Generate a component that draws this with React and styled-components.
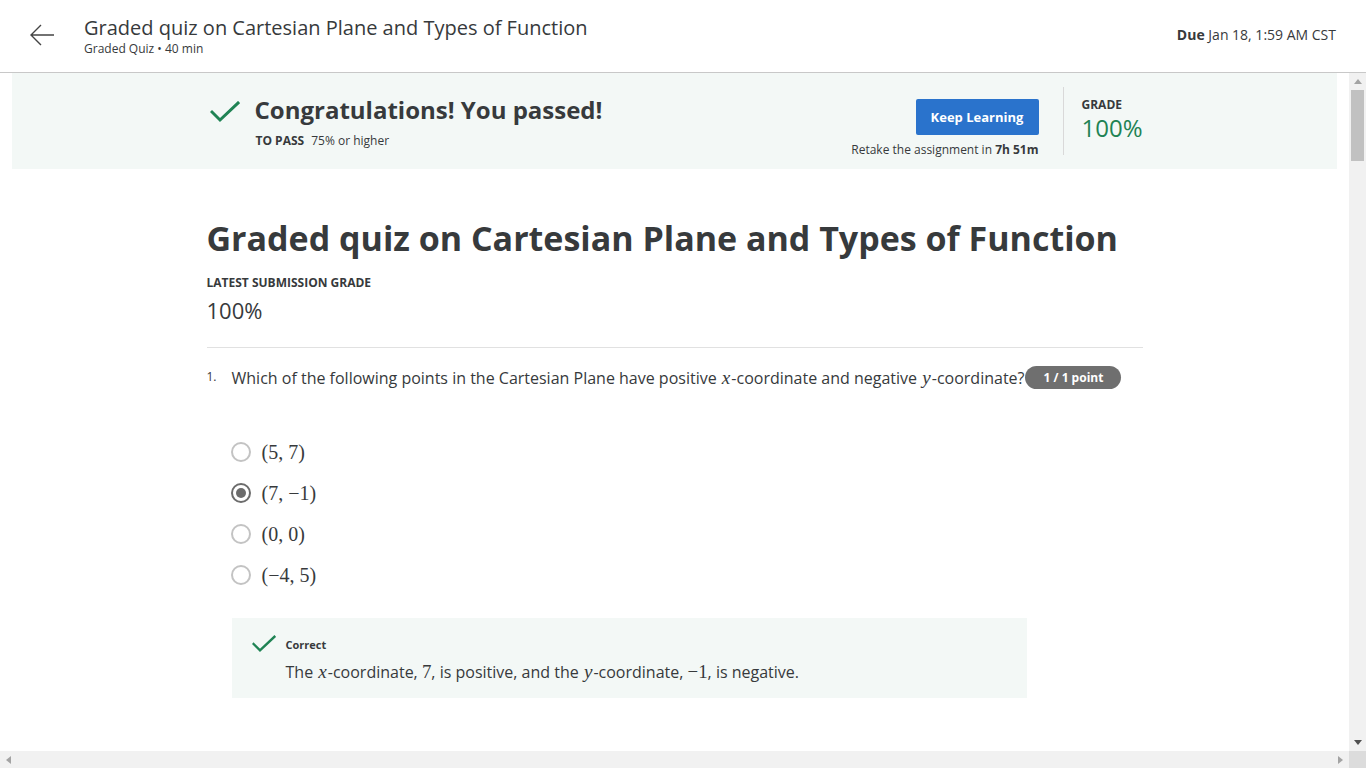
import React from "react";
import styled, { createGlobalStyle } from "styled-components";

const Global = createGlobalStyle`
  html, body { margin: 0; padding: 0; height: 100%; overflow: hidden; }
  body { font-family: "Open Sans", "Noto Sans", sans-serif; color: #373a3c; background: #fff; }
  * { box-sizing: border-box; }
`;

const Page = styled.div`
  height: 100vh;
  display: flex;
  flex-direction: column;
`;

const Header = styled.header`
  height: 73px;
  flex: none;
  border-bottom: 1px solid #c8c8c8;
  display: flex;
  align-items: center;
  padding: 0 30px 0 28px;
`;

const BackButton = styled.button`
  border: 0;
  background: none;
  padding: 0;
  width: 28px;
  height: 28px;
  display: flex;
  align-items: center;
  justify-content: center;
  margin-right: 28px;
  margin-top: -2px;
  color: #373a3c;
`;

const TitleBlock = styled.div`
  display: flex;
  flex-direction: column;
  flex: 1;
  margin-top: -1px;
`;

const HeaderTitle = styled.h1`
  margin: 0;
  font-size: 20px;
  font-weight: 400;
  line-height: 26px;
  color: #373a3c;
`;

const HeaderSub = styled.div`
  font-size: 12px;
  line-height: 16px;
  color: #373a3c;
`;

const Due = styled.div`
  font-size: 14px;
  color: #373a3c;
  margin-top: -3px;
  b { font-weight: 700; }
`;

const Body = styled.div`
  flex: 1;
  min-height: 0;
  display: grid;
  grid-template-columns: 1fr 17px;
  grid-template-rows: 1fr 17px;
`;

const Viewport = styled.div`
  overflow: hidden;
  min-height: 0;
`;

const VScroll = styled.div`
  background: #f1f1f1;
  display: flex;
  flex-direction: column;
  align-items: center;
`;

const ScrollArrow = styled.div`
  height: 17px;
  width: 17px;
  flex: none;
  display: flex;
  align-items: center;
  justify-content: center;
`;

const VThumb = styled.div`
  width: 13px;
  height: 71px;
  background: #c1c1c1;
`;

const VTrackFill = styled.div`
  flex: 1;
`;

const HScroll = styled.div`
  background: #f1f1f1;
  display: flex;
  align-items: center;
  justify-content: space-between;
`;

const Corner = styled.div`
  background: #dcdcdc;
`;

const Banner = styled.section`
  margin: 0 12px;
  background: #f3f8f6;
  height: 96px;
`;

const BannerInner = styled.div`
  width: 936px;
  margin: 0 auto;
  height: 100%;
  display: flex;
  align-items: stretch;
`;

const PassBlock = styled.div`
  flex: 1;
  display: flex;
  padding-top: 20px;
`;

const CheckWrap = styled.div`
  width: 48px;
  flex: none;
  padding-top: 8px;
  padding-left: 3px;
`;

const PassTexts = styled.div`
  display: flex;
  flex-direction: column;
`;

const PassTitle = styled.h2`
  margin: 0;
  font-size: 24px;
  line-height: 34px;
  font-weight: 700;
  color: #373a3c;
`;

const PassReq = styled.div`
  font-size: 12px;
  line-height: 20px;
  margin-top: 4px;
  padding-left: 1px;
  b { font-weight: 700; margin-right: 7px; }
`;

const ActionBlock = styled.div`
  display: flex;
  flex-direction: column;
  align-items: flex-end;
  padding-top: 26px;
`;

const PrimaryButton = styled.button`
  width: 123px;
  height: 36px;
  border: 0;
  border-radius: 2px;
  background: #2a73cc;
  color: #fff;
  font-family: "Open Sans", sans-serif;
  font-weight: 700;
  font-size: 13px;
`;

const Retake = styled.div`
  font-size: 12px;
  line-height: 16px;
  margin-top: 7px;
  b { font-weight: 700; }
`;

const Divider = styled.div`
  width: 1px;
  background: #d9d9d9;
  margin: 14px 18px 14px 24px;
`;

const GradeBlock = styled.div`
  width: 61px;
  display: flex;
  flex-direction: column;
  padding-top: 24px;
`;

const SmallCaps = styled.div`
  font-size: 12px;
  font-weight: 700;
  line-height: 16px;
  color: #373a3c;
`;

const GradeValue = styled.div`
  font-size: 24px;
  line-height: 30px;
  color: #1f8354;
`;

const Main = styled.main`
  width: 936px;
  margin: 0 auto;
  padding-top: 45px;
`;

const QuizTitle = styled.h1`
  margin: 0;
  font-size: 34px;
  line-height: 48px;
  font-weight: 700;
  color: #373a3c;
`;

const LatestLabel = styled(SmallCaps)`
  margin-top: 13px;
`;

const LatestValue = styled.div`
  font-size: 22px;
  line-height: 30px;
  margin-top: 4px;
  color: #373a3c;
`;

const Rule = styled.hr`
  border: 0;
  border-top: 1px solid #e1e1e1;
  margin: 22px 0 0;
`;

const Question = styled.div`
  display: flex;
  align-items: center;
  margin-top: 18px;
`;

const QNum = styled.span`
  font-size: 12px;
  width: 25px;
  flex: none;
  margin-top: -2px;
`;

const QText = styled.span`
  font-size: 16px;
  line-height: 22px;
  color: #373a3c;
`;

const MathI = styled.i`
  font-family: "Liberation Serif", "DejaVu Serif", serif;
  font-style: italic;
  font-size: 1.2em;
  padding: 0 1px;
`;

const MathN = styled.span`
  font-family: "Liberation Serif", "DejaVu Serif", serif;
  font-size: 1.18em;
`;

const PointBadge = styled.span`
  display: inline-flex;
  align-items: center;
  justify-content: center;
  width: 96px;
  height: 23px;
  border-radius: 12px;
  background: #6f6f6f;
  color: #fff;
  font-size: 12px;
  font-weight: 700;
  margin-left: 1px;
`;

const Options = styled.div`
  display: flex;
  flex-direction: column;
  gap: 13px;
  margin-top: 49px;
  padding-left: 24px;
`;

const Option = styled.label`
  display: flex;
  align-items: center;
  height: 28px;
`;

const Radio = styled.span`
  width: 20px;
  height: 20px;
  border-radius: 50%;
  border: 2px solid ${(p) => (p.$checked ? "#6c6c6c" : "#c3c3c3")};
  display: flex;
  align-items: center;
  justify-content: center;
  margin-right: 11px;
  &::after {
    content: "";
    width: 10px;
    height: 10px;
    border-radius: 50%;
    background: ${(p) => (p.$checked ? "#6c6c6c" : "transparent")};
  }
`;

const OptionText = styled.span`
  font-family: "Liberation Serif", "DejaVu Serif", serif;
  font-size: 20px;
  color: #373a3c;
  margin-top: 1px;
`;

const Feedback = styled.div`
  margin: 29px 0 0 25px;
  width: 795px;
  height: 80px;
  background: #f3f8f6;
  display: flex;
  padding: 17px 0 0 20px;
`;

const FeedbackIcon = styled.div`
  width: 34px;
  flex: none;
`;

const FeedbackBody = styled.div`
  display: flex;
  flex-direction: column;
`;

const FeedbackTitle = styled.div`
  font-size: 11px;
  font-weight: 700;
  line-height: 20px;
`;

const FeedbackText = styled.div`
  font-size: 16px;
  line-height: 24px;
  margin-top: 5px;
`;

const Check = ({ w = 30, h = 22 }) => (
  <svg width={w} height={h} viewBox="0 0 30 22" fill="none">
    <polyline points="2,11 10,19 28,2" stroke="#1f8354" strokeWidth="3" strokeLinecap="square" />
  </svg>
);

const options = [
  { t: "(5, 7)" },
  { t: "(7, −1)", checked: true },
  { t: "(0, 0)" },
  { t: "(−4, 5)" },
];

export default function App() {
  return (
    <Page>
      <Global />
      <Header>
        <BackButton aria-label="Back">
          <svg width="26" height="22" viewBox="0 0 26 22" fill="none">
            <path d="M25 11H2M12 1L2 11l10 10" stroke="#444" strokeWidth="1.4" />
          </svg>
        </BackButton>
        <TitleBlock>
          <HeaderTitle>Graded quiz on Cartesian Plane and Types of Function</HeaderTitle>
          <HeaderSub>Graded Quiz • 40 min</HeaderSub>
        </TitleBlock>
        <Due>
          <b>Due</b> Jan 18, 1:59 AM CST
        </Due>
      </Header>
      <Body>
        <Viewport>
          <Banner>
            <BannerInner>
              <PassBlock>
                <CheckWrap>
                  <Check />
                </CheckWrap>
                <PassTexts>
                  <PassTitle>Congratulations! You passed!</PassTitle>
                  <PassReq>
                    <b>TO PASS</b>75% or higher
                  </PassReq>
                </PassTexts>
              </PassBlock>
              <ActionBlock>
                <PrimaryButton>Keep Learning</PrimaryButton>
                <Retake>
                  Retake the assignment in <b>7h 51m</b>
                </Retake>
              </ActionBlock>
              <Divider />
              <GradeBlock>
                <SmallCaps>GRADE</SmallCaps>
                <GradeValue>100%</GradeValue>
              </GradeBlock>
            </BannerInner>
          </Banner>
          <Main>
            <QuizTitle>Graded quiz on Cartesian Plane and Types of Function</QuizTitle>
            <LatestLabel>LATEST SUBMISSION GRADE</LatestLabel>
            <LatestValue>100%</LatestValue>
            <Rule />
            <Question>
              <QNum>1.</QNum>
              <QText>
                Which of the following points in the Cartesian Plane have positive <MathI>x</MathI>-coordinate and
                negative <MathI>y</MathI>-coordinate?
              </QText>
              <PointBadge>1 / 1 point</PointBadge>
            </Question>
            <Options>
              {options.map((o) => (
                <Option key={o.t}>
                  <Radio $checked={o.checked} />
                  <OptionText>{o.t}</OptionText>
                </Option>
              ))}
            </Options>
            <Feedback>
              <FeedbackIcon>
                <Check w={24} h={18} />
              </FeedbackIcon>
              <FeedbackBody>
                <FeedbackTitle>Correct</FeedbackTitle>
                <FeedbackText>
                  The <MathI>x</MathI>-coordinate, <MathN>7</MathN>, is positive, and the <MathI>y</MathI>-coordinate,{" "}
                  <MathN>−1</MathN>, is negative.
                </FeedbackText>
              </FeedbackBody>
            </Feedback>
          </Main>
        </Viewport>
        <VScroll>
          <ScrollArrow>
            <svg width="8" height="5" viewBox="0 0 8 5"><polygon points="0,5 8,5 4,0" fill="#a3a3a3" /></svg>
          </ScrollArrow>
          <VThumb />
          <VTrackFill />
          <ScrollArrow>
            <svg width="8" height="5" viewBox="0 0 8 5"><polygon points="0,0 8,0 4,5" fill="#505050" /></svg>
          </ScrollArrow>
        </VScroll>
        <HScroll>
          <ScrollArrow>
            <svg width="5" height="8" viewBox="0 0 5 8"><polygon points="5,0 5,8 0,4" fill="#a3a3a3" /></svg>
          </ScrollArrow>
          <ScrollArrow>
            <svg width="5" height="8" viewBox="0 0 5 8"><polygon points="0,0 0,8 5,4" fill="#a3a3a3" /></svg>
          </ScrollArrow>
        </HScroll>
        <Corner />
      </Body>
    </Page>
  );
}
